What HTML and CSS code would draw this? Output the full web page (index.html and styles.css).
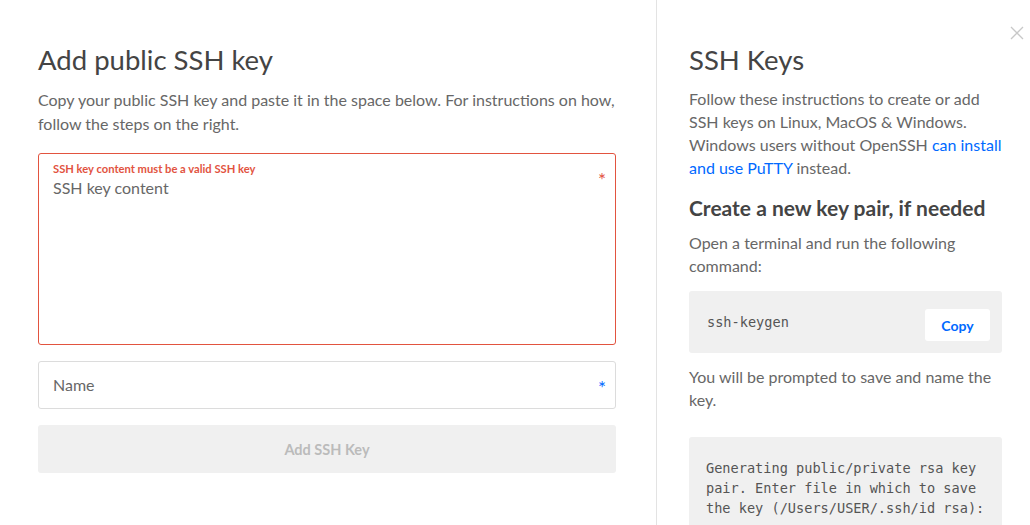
FILE: index.html
```html
<!DOCTYPE html>
<html>
<head>
<meta charset="utf-8">
<link rel="stylesheet" href="styles.css">
</head>
<body>
<div class="page">
  <section class="left">
    <h1 class="title">Add public SSH key</h1>
    <p class="lead">Copy your public SSH key and paste it in the space below. For instructions on how, follow the steps on the right.</p>
    <div class="field field-error field-area">
      <div class="field-label">SSH key content must be a valid SSH key</div>
      <div class="placeholder">SSH key content</div>
      <span class="req req-error">*</span>
    </div>
    <div class="field field-name">
      <div class="placeholder">Name</div>
      <span class="req req-blue">*</span>
    </div>
    <div class="submit">Add SSH Key</div>
  </section>
  <aside class="right">
    <div class="close">
      <svg width="14" height="14" viewBox="0 0 14 14"><path d="M1 1L13 13M13 1L1 13" stroke="#c8c8c8" stroke-width="1.3" fill="none"/></svg>
    </div>
    <h1 class="title">SSH Keys</h1>
    <p class="text">Follow these instructions to create or add SSH keys on Linux, MacOS &amp; Windows. Windows users without OpenSSH <a class="link">can install</a><br><a class="link">and use PuTTY</a> instead.</p>
    <h2 class="subtitle">Create a new key pair, if needed</h2>
    <p class="text">Open a terminal and run the following command:</p>
    <div class="code code-cmd">
      <span class="mono">ssh-keygen</span>
      <span class="copy">Copy</span>
    </div>
    <p class="text">You will be prompted to save and name the key.</p>
    <div class="code code-block">Generating public/private rsa key pair. Enter file in which to save the key (/Users/USER/.ssh/id rsa):</div>
  </aside>
</div>
</body>
</html>
```
FILE: styles.css
```css
* { box-sizing: border-box; }
html, body { margin: 0; padding: 0; background: #fff; }
body {
  font-family: "Lato", "Liberation Sans", sans-serif;
  color: #444;
  width: 1030px;
  height: 525px;
  overflow: hidden;
}
.page { display: flex; height: 525px; }
.left {
  width: 657px;
  border-right: 1px solid #e3e3e3;
  padding: 44px 40px 0 38px;
}
.title {
  margin: 0;
  font-size: 27.5px;
  line-height: 32px;
  font-weight: 400;
  color: #444;
}
.lead {
  margin: 12px 0 17px;
  font-size: 16px;
  line-height: 24px;
  color: #676767;
}
.field {
  position: relative;
  border: 1px solid #dcdcdc;
  border-radius: 3px;
  padding: 0 14px;
}
.field-error { border-color: #e2533f; }
.field-area {
  height: 192px;
  padding-top: 8px;
}
.field-label {
  font-size: 11.2px;
  line-height: 14px;
  font-weight: 700;
  color: #e2533f;
}
.field-area .placeholder { margin-top: 2px; }
.placeholder {
  font-size: 16px;
  line-height: 20px;
  color: #676767;
}
.field-name {
  margin-top: 16px;
  height: 48px;
  display: flex;
  align-items: center;
}
.req {
  position: absolute;
  right: 9px;
  font-size: 19px;
  line-height: 20px;
  font-weight: 400;
}
.req-error { top: 16px; color: #e2533f; }
.req-blue { top: 16px; color: #0069ff; }
.submit {
  margin-top: 16px;
  height: 48px;
  border-radius: 3px;
  background: #f0f0f0;
  color: #bbb;
  font-size: 14.5px;
  font-weight: 700;
  display: flex;
  align-items: center;
  justify-content: center;
}
.right {
  position: relative;
  flex: 1;
  padding: 44px 28px 0 32px;
}
.close {
  position: absolute;
  top: 26px;
  right: 6px;
  width: 14px;
  height: 14px;
  line-height: 0;
}
.text {
  margin: 0;
  font-size: 16px;
  line-height: 23px;
  color: #676767;
}
.right .title + .text { margin-top: 11px; }
.link { color: #0069ff; text-decoration: none; }
.subtitle {
  margin: 15px 0 9px;
  font-size: 21px;
  line-height: 28px;
  font-weight: 700;
  color: #444;
}
.code {
  background: #f0f0f0;
  border-radius: 3px;
}
.mono, .code-block {
  font-family: "DejaVu Sans Mono", "Liberation Mono", monospace;
  font-size: 13.6px;
  line-height: 20px;
  color: #555;
}
.code-cmd {
  margin: 14px 0 12px;
  height: 62px;
  display: flex;
  align-items: center;
  justify-content: space-between;
  padding: 0 12px 0 18px;
}
.copy {
  width: 65px;
  height: 32px;
  background: #fff;
  border-radius: 3px;
  color: #0069ff;
  font-size: 14px;
  font-weight: 700;
  display: flex;
  align-items: center;
  justify-content: center;
  margin-top: 6px;
}
.code-block {
  margin-top: 26px;
  padding: 21px 17px 20px;
}
```
